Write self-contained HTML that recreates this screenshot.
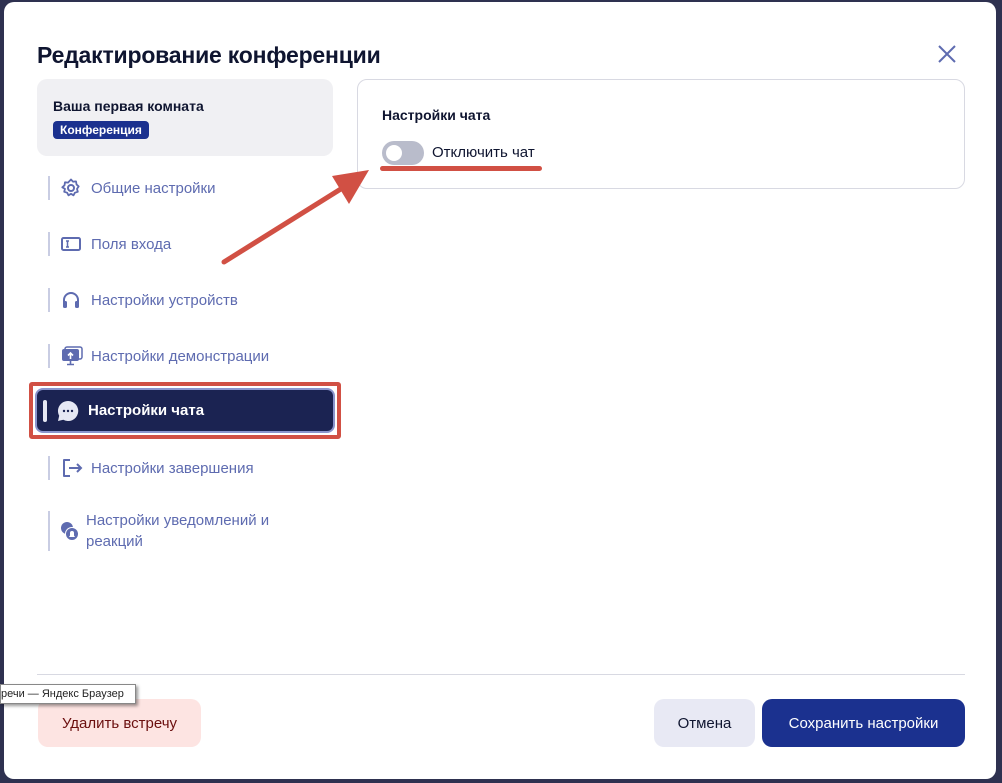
<!DOCTYPE html>
<html><head><meta charset="utf-8"><style>
*{box-sizing:border-box;margin:0;padding:0}
body{width:1002px;height:783px;background:#2e3150;font-family:"Liberation Sans","Noto Sans CJK SC",sans-serif;position:relative;overflow:hidden}
.modal{position:absolute;left:4px;top:2px;width:992px;height:777px;background:#fff;border-radius:10px}
.abs{position:absolute}
h1{position:absolute;left:33px;top:40px;font-size:23px;font-weight:700;color:#0f1530;letter-spacing:-0.2px}
.room{left:33px;top:77px;width:296px;height:77px;background:#f0f0f3;border-radius:10px}
.room .t{position:absolute;left:16px;top:19px;font-size:14px;font-weight:700;color:#0f1530}
.room .b{position:absolute;left:16px;top:42px;background:#1b318f;color:#fff;font-size:12px;font-weight:700;padding:2px 7px;border-radius:4px}
.item{position:absolute;left:44px;height:24px;border-left:2px solid #c9cde3;display:flex;align-items:center;font-size:15px;color:#5e6bb0}
.item svg{margin:0 10px 0 11px}
.active{left:25px;top:380px;width:312px;height:57px;border:4px solid #d15044;border-radius:3px}
.active .in{position:absolute;left:4px;top:4px;right:4px;bottom:4px;background:#1b2352;border-radius:6px;box-shadow:0 0 0 2px #8a94cc;display:flex;align-items:center;color:#fff;font-size:15px;font-weight:700}
.card{left:353px;top:77px;width:608px;height:110px;border:1px solid #d8d9e2;border-radius:10px}
.btn{position:absolute;top:697px;height:48px;border-radius:10px;display:flex;align-items:center;justify-content:center;font-size:15px}
</style></head><body>
<div class="modal">
<h1>Редактирование конференции</h1>
<svg class="abs" style="left:933px;top:42px" width="20" height="20" viewBox="0 0 20 20"><path d="M2 2L18 18M18 2L2 18" stroke="#5e6bb0" stroke-width="2"/></svg>
<div class="abs room"><div class="t">Ваша первая комната</div><div class="b">Конференция</div></div>

<div class="item" style="top:174px"><svg width="20" height="20" viewBox="0 0 20 20"><circle cx="10" cy="10" r="3" fill="none" stroke="#5e6bb0" stroke-width="2"/><path d="M10 1.5l2 2.2 3-.3.5 3 2.2 2-1.7 2.5.8 2.9-2.9.9-1.4 2.6-2.5-1.5-2.5 1.5-1.4-2.6-2.9-.9.8-2.9L1.3 9.3l2.2-2 .5-3 3 .3z" fill="none" stroke="#5e6bb0" stroke-width="1.8" stroke-linejoin="round"/></svg>Общие настройки</div>
<div class="item" style="top:230px"><svg width="20" height="20" viewBox="0 0 20 20"><rect x="1" y="4" width="18" height="12" rx="1.5" fill="none" stroke="#5e6bb0" stroke-width="2"/><path d="M5 7h3M6.5 7v6M5 13h3" stroke="#5e6bb0" stroke-width="1.5"/></svg>Поля входа</div>
<div class="item" style="top:286px"><svg width="20" height="20" viewBox="0 0 20 20"><path d="M3 14V10a7 7 0 0 1 14 0v4" fill="none" stroke="#5e6bb0" stroke-width="2"/><rect x="2" y="11" width="4" height="7" rx="1.5" fill="#5e6bb0"/><rect x="14" y="11" width="4" height="7" rx="1.5" fill="#5e6bb0"/></svg>Настройки устройств</div>
<div class="item" style="top:342px"><svg style="margin:0 8px 0 11px" width="22" height="20" viewBox="0 0 22 20"><rect x="4" y="1" width="17" height="12" rx="2" fill="none" stroke="#5e6bb0" stroke-width="1.5"/><rect x="1" y="3" width="17" height="12" rx="2" fill="#5e6bb0"/><path d="M9.5 13V7M7 9.5l2.5-2.5 2.5 2.5" stroke="#fff" stroke-width="1.6" fill="none"/><path d="M9.5 15v3M6 18.5h7" stroke="#5e6bb0" stroke-width="1.6"/></svg>Настройки демонстрации</div>
<div class="abs active"><div class="in"><div style="width:4px;height:22px;background:#e6e8f4;border-radius:2px;margin-left:6px"></div><svg style="margin:0 9px 0 10px" width="22" height="22" viewBox="0 0 22 22"><path d="M11 1a10 10 0 0 0-8.8 14.8L1 21l5.3-1.3A10 10 0 1 0 11 1z" fill="#e6e8f4"/><circle cx="7" cy="11" r="1.2" fill="#1b2352"/><circle cx="11" cy="11" r="1.2" fill="#1b2352"/><circle cx="15" cy="11" r="1.2" fill="#1b2352"/></svg>Настройки чата</div></div>
<div class="item" style="top:454px"><svg style="margin:0 8px 0 11px" width="22" height="20" viewBox="0 0 22 20"><path d="M9 2H3v16h6" fill="none" stroke="#5e6bb0" stroke-width="2" stroke-linejoin="round"/><path d="M8 10h12M16 6l4 4-4 4" fill="none" stroke="#5e6bb0" stroke-width="2"/></svg>Настройки завершения</div>
<div class="item" style="top:509px;height:40px;align-items:center;line-height:21px"><svg style="margin:0 6px 0 10px" width="20" height="20" viewBox="0 0 20 20"><circle cx="7" cy="7" r="6" fill="#5e6bb0"/><circle cx="12" cy="13" r="7" fill="#fff"/><circle cx="12" cy="13" r="6" fill="#5e6bb0"/><path d="M9 16h6l-1-1.5V12a2 2 0 0 0-4 0v2.5z" fill="#fff"/></svg><span>Настройки уведомлений и<br>реакций</span></div>

<div class="abs card">
<div class="abs" style="left:24px;top:27px;font-size:14px;font-weight:700;color:#0f1530">Настройки чата</div>
<div class="abs" style="left:24px;top:61px;width:42px;height:24px;border-radius:12px;background:#b9bccb"><div style="position:absolute;left:4px;top:4px;width:16px;height:16px;border-radius:50%;background:#fff"></div></div>
<div class="abs" style="left:74px;top:64px;font-size:15px;color:#0f1530">Отключить чат</div>
<div class="abs" style="left:22px;top:86px;width:162px;height:5px;border-radius:3px;background:#d15044"></div>
</div>

<svg class="abs" style="left:210px;top:160px" width="160" height="110" viewBox="0 0 160 110"><path d="M10 100L130 25" stroke="#d15044" stroke-width="5" stroke-linecap="round"/><path d="M155 8L118 14L135 42z" fill="#d15044"/></svg>

<div class="abs" style="left:33px;top:672px;width:928px;height:1px;background:#d8d9e2"></div>
<div class="btn" style="left:34px;width:163px;background:#fde4e2;color:#6b0f0f">Удалить встречу</div>
<div class="btn" style="left:650px;width:101px;background:#e8e9f4;color:#0f1530">Отмена</div>
<div class="btn" style="left:758px;width:203px;background:#1b318f;color:#fff">Сохранить настройки</div>
</div>
<div class="abs" style="left:0;top:684px;width:136px;height:20px;background:#fff;border:1px solid #888;box-shadow:2px 2px 3px rgba(0,0,0,.4);font-size:11px;color:#222;padding:3px 0 0 0;white-space:nowrap;overflow:hidden">речи — Яндекс Браузер</div>
</body></html>
